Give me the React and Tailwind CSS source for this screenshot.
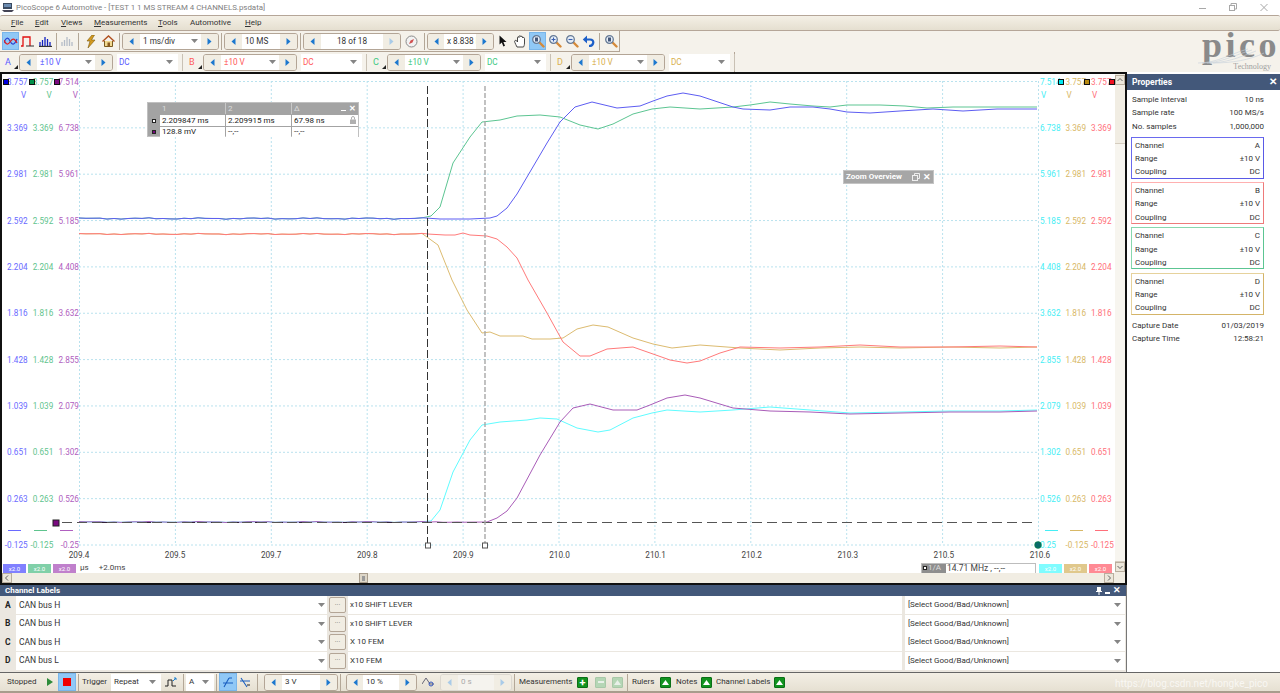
import React from "react";

const jitter = (base, from, to, a) => {
  const out = [];
  for (let x = from; x <= to; x += 7) {
    out.push([x, base + a * (Math.sin(x * 0.37) + Math.sin(x * 0.113 + 1)) * 0.5]);
  }
  return out;
};
const pts = (a) => a.map((p) => p.join(",")).join(" ");

const traces = [
  { c: "#5cc592", p: [...jitter(218.5, 79, 425, 0.7), [431, 216], [440, 207], [453, 163], [470, 137], [482, 122], [500, 120], [517, 116], [540, 115], [560, 117], [580, 125], [598, 129], [613, 124], [633, 114], [652, 109], [670, 107], [700, 109], [733, 107], [750, 105], [770, 102], [790, 104], [813, 106], [830, 107], [847, 105], [880, 105], [905, 106], [927, 108], [953, 107], [975, 107], [1000, 107], [1037, 107]] },
  { c: "#5d5df2", p: [...jitter(218.5, 79, 425, 0.8), [440, 219], [470, 219], [490, 218], [497, 216], [507, 208], [517, 194], [527, 177], [547, 143], [560, 122], [575, 107], [592, 102], [617, 108], [640, 106], [653, 101], [667, 96], [683, 93], [700, 96], [733, 107], [743, 109], [770, 110], [790, 107], [813, 107], [830, 109], [847, 112], [870, 113], [900, 111], [933, 109], [948, 110], [963, 111], [980, 110], [997, 109], [1037, 109]] },
  { c: "#dcbb70", p: [...jitter(234, 79, 428, 0.6), [438, 245], [452, 280], [467, 310], [482, 333], [490, 332], [500, 336], [523, 336], [532, 339], [550, 339], [563, 338], [577, 329], [593, 325], [608, 327], [633, 338], [653, 344], [672, 348], [700, 345], [740, 348], [780, 350], [820, 348], [860, 347], [900, 348], [950, 347], [1000, 348], [1037, 347]] },
  { c: "#ff7a7a", p: [...jitter(234, 79, 430, 0.7), [445, 235], [455, 235], [463, 233], [470, 235], [487, 236], [497, 239], [507, 247], [517, 258], [528, 280], [547, 313], [563, 342], [580, 356], [590, 356], [607, 349], [633, 347], [653, 354], [670, 360], [687, 363], [700, 361], [720, 353], [740, 347], [780, 348], [820, 347], [860, 345], [900, 347], [950, 347], [1000, 346], [1037, 347]] },
  { c: "#5ffcff", p: [...jitter(522, 79, 428, 0.4), [431, 521], [440, 510], [453, 472], [470, 440], [482, 425], [500, 422], [527, 420], [540, 418], [557, 419], [577, 428], [598, 432], [610, 430], [633, 418], [652, 413], [667, 410], [700, 412], [733, 410], [770, 407], [810, 410], [850, 413], [900, 412], [950, 411], [1000, 411], [1037, 410]] },
  { c: "#a95cb8", p: [...jitter(522, 79, 470, 0.5), [487, 522], [497, 518], [507, 511], [517, 498], [540, 455], [560, 422], [573, 408], [590, 404], [613, 410], [637, 410], [650, 405], [667, 398], [685, 395], [700, 398], [733, 408], [770, 411], [810, 412], [850, 414], [900, 413], [950, 412], [1000, 412], [1037, 411]] },
];

const Arrow = ({ dir = "l", dim }) => (
  <svg width="5" height="7" viewBox="0 0 5 7" className="flex-none">
    <path d={dir === "l" ? "M4.5 0 V7 L0.5 3.5 Z" : "M0.5 0 V7 L4.5 3.5 Z"} fill={dim ? "#a9cbe8" : "#1c78cf"} />
  </svg>
);
const Caret = () => (
  <svg width="7" height="4" viewBox="0 0 7 4" className="flex-none">
    <path d="M0 0 H7 L3.5 4 Z" fill="#858585" />
  </svg>
);
const Sep = () => <div className="w-px h-[17px] mx-[2px] flex-none bg-[#b3a797]" />;

const Stepper = ({ l = 17, t, r = 17, text, caret, center, color = "#333", dim, dimRight }) => (
  <div className={`flex flex-none h-[17px] border rounded-[3px] overflow-hidden ${dim ? "border-[#dcd8d0]" : "border-[#b3a596]"}`}>
    <div style={{ width: l }} className="flex items-center justify-center bg-[#f1ede3]"><Arrow dir="l" dim={dim} /></div>
    <div style={{ width: t, color }} className={`flex items-center overflow-hidden whitespace-nowrap ${center ? "justify-center" : "justify-between px-[3px]"} ${dim ? "bg-[#f5f3ee]" : "bg-white"}`}>
      <span>{text}</span>{caret && <Caret />}
    </div>
    <div style={{ width: r }} className="flex items-center justify-center bg-[#f1ede3]"><Arrow dir="r" dim={dim || dimRight} /></div>
  </div>
);

const Tool = ({ w = 17, active, children }) => (
  <div style={{ width: w }} className={`h-[18px] flex-none flex items-center justify-center ${active ? "bg-[#90c8f6] border border-[#7ab6ea]" : ""}`}>{children}</div>
);

const Mag = ({ inner }) => (
  <svg width="14" height="14" viewBox="0 0 14 14">
    <path d="M8 8 L12.5 12.5" stroke="#d58a3a" strokeWidth="2.4" strokeLinecap="round" />
    <circle cx="5.5" cy="5.5" r="3.8" fill="#e6eef8" stroke="#667a96" strokeWidth="1.3" />
    {inner === "+" && <path d="M3.5 5.5 H7.5 M5.5 3.5 V7.5" stroke="#3a5fb0" strokeWidth="1.1" />}
    {inner === "-" && <path d="M3.5 5.5 H7.5" stroke="#3a5fb0" strokeWidth="1.1" />}
    {inner === "o" && <rect x="4" y="3.5" width="3" height="4" fill="#44577a" />}
  </svg>
);

const ChannelGroup = ({ name, color }) => (
  <div className="flex items-center w-[184px] flex-none">
    <div className="w-[17px] h-[17px] relative flex-none">
      <span style={{ color }} className="absolute left-[3px] top-[2px] text-[9px]">{name}</span>
      <span className="absolute right-[1px] bottom-[2px] w-0 h-0 border-l-[4px] border-l-transparent border-b-[4px] border-b-[#222]" />
    </div>
    <Stepper text="±10 V" t={58} caret color={color} />
    <div style={{ color }} className="ml-[4px] w-[61px] h-[17px] bg-white flex items-center justify-between px-[2px] pr-[5px] flex-none">
      <span>DC</span><Caret />
    </div>
    <div className="ml-[4px] w-px h-[17px] bg-[#c9c1b4]" />
  </div>
);

const lb = ["3.369", "2.981", "2.592", "2.204", "1.816", "1.428", "1.039", "0.651", "0.263", "-0.125"];
const lp = ["6.738", "5.961", "5.185", "4.408", "3.632", "2.855", "2.079", "1.302", "0.526", "-0.25"];
const rc = lp.slice(0, 9).concat("0.25");

const Square = ({ color, className }) => (
  <span style={{ background: color }} className={`absolute top-[3px] w-[6px] h-[6px] border border-[#111] ${className}`} />
);

const AxisLeft = () => (
  <div className="w-[77px] flex-none flex flex-col pt-[1.5px] text-[8.2px]">
    <div className="h-[46.35px] flex-none">
      <div className="grid grid-cols-3 h-[12px] leading-[12px] text-right">
        <span className="relative text-[#6a6aff]">3.757<Square color="#0000e0" className="left-[1px]" /></span>
        <span className="relative text-[#5fc48e]">3.757<Square color="#00904a" className="left-[1px]" /></span>
        <span className="relative text-[#b060c0]">7.514<Square color="#7a0a80" className="left-[1px]" /></span>
      </div>
      <div className="grid grid-cols-3 h-[12px] mt-[1px] leading-[12px] text-right pr-[1px]">
        <span className="text-[#6a6aff] pr-[1px]">V</span>
        <span className="text-[#5fc48e] pr-[1px]">V</span>
        <span className="text-[#b060c0]">V</span>
      </div>
    </div>
    {lb.map((v, i) => (
      <div key={v} className="h-[46.35px] flex-none">
        <div className="grid grid-cols-3 h-[12px] leading-[12px] text-right">
          <span className="text-[#6a6aff]">{v}</span>
          <span className="text-[#5fc48e]">{v}</span>
          <span className="text-[#b060c0]">{lp[i]}</span>
        </div>
        {i === 8 && (
          <div className="grid grid-cols-[13px_13px_13px] mt-[25px] pl-[6px] gap-x-[13px]">
            <span className="h-px bg-[#6a6aff]" /><span className="h-px bg-[#5fc48e]" /><span className="h-px bg-[#b060c0]" />
          </div>
        )}
      </div>
    ))}
  </div>
);

const AxisRight = () => (
  <div className="w-[77px] flex-none flex flex-col pt-[1.5px] pl-[2px] text-[8.2px]">
    <div className="h-[46.35px] flex-none">
      <div className="grid grid-cols-[25.5px_25.5px_25px] h-[12px] leading-[12px]">
        <span className="relative text-[#45eef5]">7.514<Square color="#00e8f0" className="left-[18px]" /></span>
        <span className="relative text-[#d8b866]">3.757<Square color="#b88a10" className="left-[18px]" /></span>
        <span className="relative text-[#ff6f7a]">3.757<Square color="#f01020" className="left-[18px]" /></span>
      </div>
      <div className="grid grid-cols-[25.5px_25.5px_25px] h-[12px] mt-[1px] leading-[12px] pl-[1px]">
        <span className="text-[#45eef5]">V</span><span className="text-[#d8b866]">V</span><span className="text-[#ff6f7a]">V</span>
      </div>
    </div>
    {lb.map((v, i) => (
      <div key={v} className="h-[46.35px] flex-none">
        <div className="grid grid-cols-[25.5px_25.5px_25px] h-[12px] leading-[12px]">
          <span className="text-[#45eef5]">{rc[i]}</span>
          <span className="text-[#d8b866]">{v}</span>
          <span className="text-[#ff6f7a]">{v}</span>
        </div>
        {i === 8 && (
          <div className="grid grid-cols-[13px_13px_13px] mt-[25px] gap-x-[12px] pl-[5px]">
            <span className="h-px bg-[#45eef5]" /><span className="h-px bg-[#d8b866]" /><span className="h-px bg-[#ff6f7a]" />
          </div>
        )}
      </div>
    ))}
  </div>
);

const Plot = () => {
  const vx = Array.from({ length: 11 }, (_, i) => 79.5 + 95.9 * i);
  const hy = Array.from({ length: 11 }, (_, i) => 81.5 + 46.35 * i);
  return (
    <div className="relative w-[959px] h-[466px] mt-[6px] flex-none">
      <svg width="959" height="466" viewBox="79 80 959 466" className="overflow-visible block">
        {vx.map((x) => <line key={x} x1={x} x2={x} y1="81" y2="545" stroke="#b9e2ee" strokeDasharray="2 2" />)}
        {hy.map((y) => <line key={y} x1="79" x2="1038" y1={y} y2={y} stroke="#b9e2ee" strokeDasharray="2 2" />)}
        {traces.map((t, i) => <polyline key={i} points={pts(t.p)} fill="none" stroke={t.c} strokeWidth="1" />)}
        <line x1="79" x2="428" y1="522.5" y2="522.5" stroke="#33203a" strokeDasharray="6 16" />
        <line x1="62" x2="1037" y1="522.5" y2="522.5" stroke="#555" strokeDasharray="10 5" />
        <line x1="427.5" x2="427.5" y1="86" y2="543" stroke="#333" strokeDasharray="8 3" />
        <line x1="485" x2="485" y1="86" y2="543" stroke="#a8a8a8" strokeWidth="1.4" strokeDasharray="5 2" />
        <rect x="425.5" y="543" width="5" height="5" fill="#fff" stroke="#555" />
        <rect x="482.5" y="543" width="5" height="5" fill="#fff" stroke="#555" />
        <rect x="53" y="520" width="6" height="6" fill="#7a0a80" stroke="#222" />
        <circle cx="1038" cy="545" r="3.4" fill="#0a6a6a" stroke="#083" strokeWidth="0.5" />
      </svg>

      <div className="absolute left-[68px] top-[22px] w-[212px] h-[35px] bg-[#a3a3a3] border border-[#c0c0c0] flex flex-col text-[#222]">
        <div className="h-[11px] flex text-[#dcdcdc] leading-[11px] pl-[12px] flex-none">
          <span className="w-[66px] pl-[2px] border-r border-[#c8c8c8]">1</span>
          <span className="w-[66px] pl-[2px] border-r border-[#c8c8c8]">2</span>
          <span className="flex-1 pl-[2px] flex justify-between pr-[2px]">
            <span>Δ</span>
            <span className="flex items-center gap-[3px] text-white font-bold"><span className="w-[5px] h-px bg-white mt-[4px]" /><span>✕</span></span>
          </span>
        </div>
        <div className="flex h-[11px] leading-[11px] mt-px">
          <span className="w-[12px] flex items-center justify-center"><span className="w-[4px] h-[4px] bg-white border border-[#222]" /></span>
          <span className="w-[65px] bg-white pl-[2px] mr-px">2.209847 ms</span>
          <span className="w-[65px] bg-white pl-[2px] mr-px">2.209915 ms</span>
          <span className="flex-1 bg-white pl-[2px] flex justify-between pr-[2px]">67.98 ns
            <svg width="6" height="8" viewBox="0 0 6 8" className="mt-[1px]"><rect y="3.5" width="6" height="4.5" fill="#b0b0b0" /><path d="M1.5 3.5 V2 a1.5 1.5 0 0 1 3 0 V3.5" stroke="#b0b0b0" fill="none" /></svg>
          </span>
        </div>
        <div className="flex h-[10px] leading-[10px] mt-px">
          <span className="w-[12px] flex items-center justify-center"><span className="w-[4px] h-[4px] bg-[#7a0a80] border border-[#222]" /></span>
          <span className="w-[65px] bg-white pl-[2px] mr-px">128.8 mV</span>
          <span className="w-[65px] bg-white pl-[2px] mr-px">--,--</span>
          <span className="flex-1 bg-white pl-[2px]">--,--</span>
        </div>
      </div>

      <div className="absolute left-[764px] top-[90px] w-[91px] h-[14px] bg-[#a6a6a6] border border-[#c4c4c4] flex items-center justify-between px-[2px] text-white font-bold">
        <span>Zoom Overview</span>
        <span className="flex items-center gap-[3px]">
          <svg width="8" height="8" viewBox="0 0 8 8" fill="none" stroke="#eee"><rect x="0.5" y="2.5" width="5" height="5" /><path d="M2.5 2.5 V0.5 H7.5 V5.5 H5.5" /></svg>
          <span className="text-[9px] leading-none">✕</span>
        </span>
      </div>
    </div>
  );
};

const xl = ["209.4", "209.5", "209.7", "209.8", "209.9", "210.0", "210.1", "210.2", "210.3", "210.5", "210.6"];

const Chip = ({ c }) => (
  <div style={{ background: c }} className="w-[23px] h-[9px] flex-none text-white text-[6px] leading-[9px] text-center">x2.0</div>
);

const ScrollBtn = ({ children, className = "" }) => (
  <div className={`w-[10px] h-[10px] border border-[#b9ae9e] bg-[#ece7db] flex items-center justify-center flex-none ${className}`}>{children}</div>
);
const Chev = ({ d }) => (
  <svg width="6" height="6" viewBox="0 0 6 6" fill="none" stroke="#555" strokeWidth="0.9"><path d={d} /></svg>
);

const Scope = () => (
  <div className="h-[513px] flex-none border-2 border-[#111] flex flex-col bg-white">
    <div className="flex flex-1 min-h-0">
      <div className="w-[1113px] flex-none flex flex-col">
        <div className="flex h-[475px] flex-none"><AxisLeft /><Plot /><AxisRight /></div>
        <div className="h-[12px] flex-none flex justify-between pl-[77px] pr-[75px] text-[#444] leading-[12px] text-[8.2px]">
          {xl.map((x) => <span key={x} className="w-0 flex justify-center whitespace-nowrap">{x}</span>)}
        </div>
        <div className="h-[12px] flex-none flex items-center pl-[1px] gap-[2px] mt-[1px]">
          <Chip c="#8080ff" /><Chip c="#80d0a8" /><Chip c="#c080cc" />
          <span className="ml-[2px] text-[#444]">µs</span>
          <span className="ml-[8px] text-[#444]">+2.0ms</span>
          <div className="ml-auto w-[115px] h-[11px] border border-[#bdbdbd] flex items-center text-[#444] mr-[1px]">
            <span className="w-[24px] h-full bg-[#8e8e8e] text-[#ddd] flex items-center gap-[1px] pl-[1px]"><span className="w-[4px] h-[4px] bg-white border border-[#222]" />1/A</span>
            <span className="pl-[1px] whitespace-nowrap text-[8.5px]">14.71 MHz , --,--</span>
          </div>
          <Chip c="#80fcff" /><Chip c="#e0c88c" /><Chip c="#ff8a94" />
          <div className="w-[1px]" />
        </div>
      </div>
      <div className="flex-1 flex flex-col bg-[#f1ede3] items-start pt-[1px] pb-[1px]">
        <ScrollBtn><Chev d="M0.5 4 L3 1.5 L5.5 4" /></ScrollBtn>
        <div className="flex-1 w-full flex flex-col pt-[58px]"><div className="flex-1 border-y border-[#d5cdbf] bg-[#f7f5ef]" /></div>
        <ScrollBtn><Chev d="M0.5 2 L3 4.5 L5.5 2" /></ScrollBtn>
      </div>
    </div>
    <div className="h-[10px] flex-none flex items-center bg-[#f1ede3] pr-[11px]">
      <ScrollBtn><Chev d="M4 0.5 L1.5 3 L4 5.5" /></ScrollBtn>
      <div className="flex-1 pl-[347px]"><div className="w-[9px] h-[10px] border border-[#a89c8c] bg-[#ddd6c8] flex items-center justify-center"><span className="w-[3px] h-[5px] bg-[#9a9a9a]" /></div></div>
      <ScrollBtn><Chev d="M2 0.5 L4.5 3 L2 5.5" /></ScrollBtn>
    </div>
  </div>
);

const rows = [
  ["A", "CAN bus H", "x10 SHIFT LEVER"],
  ["B", "CAN bus H", "x10 SHIFT LEVER"],
  ["C", "CAN bus H", "X 10 FEM"],
  ["D", "CAN bus L", "X10 FEM"],
];

const ChannelLabels = () => (
  <div className="h-[87px] flex-none flex flex-col bg-[#ebe7e0] border-r border-[#777]">
    <div className="h-[11px] flex-none bg-[#43587a] text-white font-bold flex items-center justify-between px-[5px] leading-none">
      <span>Channel Labels</span>
      <span className="flex items-center gap-[3px] text-[9px]">
        <svg width="6" height="8" viewBox="0 0 6 8" fill="#fff"><path d="M1 0 H5 V4 H6 V5 H3.5 V8 H2.5 V5 H0 V4 H1 Z" /></svg>
        <span className="w-[5px] h-[2px] bg-white mt-[4px]" />
        <span>✕</span>
      </span>
    </div>
    <div className="flex-1 flex flex-col gap-[0.6px] pb-[1px]">
      {rows.map(([a, b, c]) => (
        <div key={a} className="h-[18px] flex items-stretch">
          <span className="w-[16px] flex-none font-bold text-[#222] flex items-center pl-[5px] text-[8.5px]">{a}</span>
          <div className="w-[311px] flex-none bg-white flex items-center justify-between pl-[3px] pr-[2px] text-[#333] text-[8.5px]"><span>{b}</span><Caret /></div>
          <div className="w-[17px] flex-none mx-[2px] h-[16px] self-center border border-[#b3a596] rounded-[2px] bg-[#f1ede3] text-[#777] flex items-center justify-center text-[7px] leading-none">···</div>
          <div className="w-[554px] flex-none bg-white flex items-center pl-[2px] text-[#333]">{c}</div>
          <div className="w-[220px] ml-[3px] flex-none bg-white flex items-center justify-between pl-[3px] pr-[4px] text-[#333]"><span>[Select Good/Bad/Unknown]</span><Caret /></div>
        </div>
      ))}
    </div>
  </div>
);

const PropRow = ({ a, b }) => (
  <div className="flex justify-between h-[13.3px] leading-[13.3px] text-[#333] whitespace-nowrap"><span>{a}</span><span>{b}</span></div>
);
const ChBox = ({ name, c1, c2 }) => (
  <div style={{ borderColor: c1, borderBottomColor: c2, borderRightColor: c2 }} className="w-[133px] h-[42px] border-[1.5px] px-[3px] pt-[1px]">
    <PropRow a="Channel" b={name} />
    <PropRow a="Range" b="±10 V" />
    <PropRow a="Coupling" b="DC" />
  </div>
);

const Properties = () => (
  <div className="w-[153px] flex-none flex flex-col bg-white">
    <div className="h-[16px] mt-[2px] flex-none bg-[#43587a] text-white font-bold flex items-center justify-between pl-[5px] pr-[3px] text-[8.5px]">
      <span>Properties</span><span className="text-[10px] leading-none">✕</span>
    </div>
    <div className="pl-[5px] pr-[16px] pt-[3px]">
      <PropRow a="Sample interval" b="10 ns" />
      <PropRow a="Sample rate" b="100 MS/s" />
      <PropRow a="No. samples" b="1,000,000" />
      <div className="flex flex-col gap-[3.3px] mt-[4px] -mr-[1px] -ml-[1px]">
        <ChBox name="A" c1="#6a6aee" c2="#5a5ae6" />
        <ChBox name="B" c1="#ffb0b0" c2="#ee7a7a" />
        <ChBox name="C" c1="#88d8ae" c2="#5cc592" />
        <ChBox name="D" c1="#e6d29c" c2="#d4b468" />
      </div>
      <div className="mt-[4px]">
        <PropRow a="Capture Date" b="01/03/2019" />
        <PropRow a="Capture Time" b="12:58:21" />
      </div>
    </div>
  </div>
);

const GreenBtn = ({ kind, dim }) => (
  <div className={`w-[11px] h-[11px] flex-none rounded-[1px] flex items-center justify-center ${dim ? "bg-[#b5d6b5] border border-[#a8c8a8]" : "bg-[#12931f] border border-[#0b6f17]"}`}>
    {kind === "+" && <span className="text-white text-[11px] font-bold leading-none">+</span>}
    {kind === "-" && <span className="w-[6px] h-[2px] bg-[#e8f0e8]" />}
    {kind === "^" && <svg width="7" height="5" viewBox="0 0 7 5"><path d="M0 5 L3.5 0 L7 5 Z" fill={dim ? "#e8f0e8" : "#fff"} /></svg>}
  </div>
);

const Select = ({ w, text }) => (
  <div style={{ width: w }} className="h-[17px] flex-none bg-white flex items-center justify-between px-[3px] pr-[5px] text-[#333]"><span>{text}</span><Caret /></div>
);

const Bottom = () => (
  <div className="h-[21px] flex-none border-t border-[#666] bg-gradient-to-b from-[#f3efe5] to-[#e6e0d2] border-b-2 border-b-[#a89c8c] flex items-center text-[#333] relative">
    <span className="w-[42px] pl-[7px] flex-none">Stopped</span>
    <div className="w-[16px] flex-none flex justify-center"><svg width="6" height="8" viewBox="0 0 6 8"><path d="M0 0 V8 L6 4 Z" fill="#2e8b3a" /></svg></div>
    <Tool w={18} active><span className="w-[8px] h-[8px] bg-[#f00000]" /></Tool>
    <Sep />
    <span className="w-[30px] flex-none pl-[1px]">Trigger</span>
    <Select w={50} text="Repeat" />
    <Tool w={20}>
      <svg width="12" height="11" viewBox="0 0 12 11" fill="none"><path d="M0 9 H3 V3 H7 V9 H11" stroke="#222" /><path d="M8 4 L11 1 M9 1 H11 V3" stroke="#1a7fd0" /></svg>
    </Tool>
    <Sep />
    <Select w={28} text="A" />
    <Sep />
    <Tool w={18} active>
      <svg width="11" height="11" viewBox="0 0 11 11" fill="none"><path d="M1 10 L6 1 M0 6 H10 M6 1 L9 1" stroke="#1a5fc0" strokeWidth="1.1" /></svg>
    </Tool>
    <Tool w={16}>
      <svg width="11" height="11" viewBox="0 0 11 11" fill="none"><path d="M1 1 L7 10 M0 4 H10" stroke="#1a5fc0" strokeWidth="1.1" /><path d="M7 8 L10 8" stroke="#222" /></svg>
    </Tool>
    <div className="w-[2px]" /><Sep />
    <div className="w-[4px]" />
    <Stepper text="3 V" t={38} />
    <Sep />
    <div className="w-[3px]" />
    <Stepper text="10 %" t={36} l={16} />
    <Tool w={23}>
      <svg width="13" height="12" viewBox="0 0 13 12" fill="none"><path d="M0 8 L4 2 L8 8 L12 8" stroke="#667" /><circle cx="9" cy="8" r="2" stroke="#35b" /></svg>
    </Tool>
    <Stepper text="0 s" t={36} dim color="#aaa" />
    <Sep />
    <span className="pl-[2px] w-[60px] flex-none">Measurements</span>
    <GreenBtn kind="+" />
    <div className="w-[7px]" />
    <GreenBtn kind="-" dim />
    <div className="w-[6px]" />
    <GreenBtn kind="^" dim />
    <div className="w-[2px]" /><Sep />
    <span className="pl-[2px] w-[30px] flex-none">Rulers</span>
    <GreenBtn kind="^" />
    <span className="pl-[5px] w-[30px] flex-none">Notes</span>
    <GreenBtn kind="^" />
    <span className="pl-[4px] w-[62px] flex-none">Channel Labels</span>
    <GreenBtn kind="^" />
    <span className="absolute left-[1115px] top-[3px] text-[10px] text-white/70 whitespace-nowrap">https://blog.csdn.net/hongke_pico</span>
  </div>
);

export default function App() {
  return (
    <div className="w-[1280px] h-[693px] overflow-hidden flex flex-col bg-white text-[8px] font-['Roboto',Arial,sans-serif]">
      {/* title */}
      <div className="h-[15px] flex-none flex items-center bg-white">
        <svg width="12" height="11" viewBox="0 0 12 11" className="ml-[2px]"><rect x="1" y="1" width="9" height="6" fill="#3a4a60" /><rect x="2" y="2" width="7" height="3" fill="#6b8bb0" /><path d="M0 8 H12 L10 10 H2 Z" fill="#445" /></svg>
        <span className="ml-[2px] text-[7.9px] text-[#808080] whitespace-nowrap">PicoScope 6 Automotive - [TEST 1 1 MS STREAM 4 CHANNELS.psdata]</span>
        <div className="ml-auto flex items-center">
          <svg width="30" height="10" viewBox="0 0 30 10" fill="none" stroke="#a8a8a8"><path d="M0 5.5 H7" /></svg>
          <svg width="31" height="10" viewBox="0 0 31 10" fill="none" stroke="#a8a8a8"><rect x="0.5" y="2.5" width="5" height="5" /><path d="M2 2.5 V0.5 H7.5 V6 H5.5" /></svg>
          <svg width="20" height="10" viewBox="0 0 20 10" fill="none" stroke="#a8a8a8"><path d="M0.5 1 L7.5 8 M7.5 1 L0.5 8" /></svg>
        </div>
      </div>
      {/* menu */}
      <div className="h-[16px] flex-none border-y border-[#b5a698] bg-gradient-to-b from-[#f4f0e6] to-[#e5dfd0] flex items-center text-[#333] text-[8px] rounded-[2px]">
        <span className="pl-[11px] w-[35px]"><u>F</u>ile</span>
        <span className="w-[26px]"><u>E</u>dit</span>
        <span className="w-[33px]"><u>V</u>iews</span>
        <span className="w-[64px]"><u>M</u>easurements</span>
        <span className="w-[32px]"><u>T</u>ools</span>
        <span className="w-[55px]">Automotive</span>
        <span><u>H</u>elp</span>
      </div>
      {/* toolbars */}
      <div className="h-[41px] flex-none bg-[#f5f2eb] flex relative">
        <div className="flex flex-col">
          <div className="h-[21px] w-[620px] border-r border-b border-[#b3a596] flex items-center pl-[2px] text-[#333] text-[8.2px]">
            <Tool active>
              <svg width="14" height="11" viewBox="0 0 14 11" fill="none"><path d="M0 7 C2 1 4 1 6 5 S10 10 13 3" stroke="#2a3fd0" strokeWidth="1.2" /><path d="M0 4 C2 9 4 9 6 6 S10 1 13 7" stroke="#e02020" strokeWidth="1.2" /></svg>
            </Tool>
            <Tool>
              <svg width="13" height="11" viewBox="0 0 13 11" fill="none"><path d="M0 10 H2 V1 H9 V10" stroke="#e01010" strokeWidth="1.3" /><path d="M5 10 H13" stroke="#333" /></svg>
            </Tool>
            <Tool w={18}>
              <svg width="13" height="11" viewBox="0 0 13 11" stroke="#1020c0" strokeWidth="1.3"><path d="M1 10 V6 M3.5 10 V4 M6 10 V1 M8.5 10 V3 M11 10 V6" /><path d="M0 10.5 H13" stroke="#333" /></svg>
            </Tool>
            <Sep />
            <Tool>
              <svg width="13" height="11" viewBox="0 0 13 11" stroke="#b4bcc8" strokeWidth="1.3"><path d="M1 10 V6 M3.5 10 V4 M6 10 V1 M8.5 10 V3 M11 10 V6" /></svg>
            </Tool>
            <Sep />
            <Tool w={18}>
              <svg width="11" height="13" viewBox="0 0 11 13"><path d="M7 0 L2 6 H5 L3 13 L10 5 H6.5 L9.5 0 Z" fill="#d49a20" stroke="#7a5a10" strokeWidth="0.6" /></svg>
            </Tool>
            <Tool w={18}>
              <svg width="13" height="12" viewBox="0 0 13 12"><path d="M2.5 6 V11.5 H10.5 V6" fill="#f0d890" stroke="#7a5a20" /><path d="M0.5 6.5 L6.5 1 L12.5 6.5" fill="none" stroke="#b05020" strokeWidth="1.4" /><rect x="5.5" y="7.5" width="2.5" height="4" fill="#8a5a20" /></svg>
            </Tool>
            <Sep />
            <div className="w-[1px]" />
            <Stepper text="1 ms/div" t={61} caret />
            <div className="w-[3px]" /><Sep /><div className="w-px h-[17px] bg-[#b3a597]" /><div className="w-[2px]" />
            <Stepper text="10 MS" t={38} />
            <Sep /><div className="w-[1px]" />
            <Stepper text="18 of 18" t={62} center dimRight />
            <Tool w={21}>
              <svg width="13" height="13" viewBox="0 0 13 13" fill="none"><circle cx="6.5" cy="6.5" r="5.5" fill="#f2f2f2" stroke="#8a8a8a" /><path d="M9 4 L5.5 5.5 L4 9 L7.5 7.5 Z" fill="#d05050" /></svg>
            </Tool>
            <Sep /><div className="w-[1px]" />
            <Stepper text="x 8.838 k" t={32} l={16} />
            <Tool w={18}>
              <svg width="8" height="12" viewBox="0 0 8 12"><path d="M0.5 0.5 V9.5 L2.8 7.5 L4.4 11.5 L6 10.8 L4.4 7 H7.5 Z" fill="#111" /></svg>
            </Tool>
            <Tool>
              <svg width="13" height="13" viewBox="0 0 13 13" fill="#fff" stroke="#333" strokeWidth="0.9"><path d="M3 12 C1 8 0 6 1 5.5 S3 6 3.5 7 V2.5 C3.5 1.5 5 1.5 5 2.5 V1.5 C5 .5 6.8 .5 6.8 1.5 V2 C7 1 8.5 1 8.5 2.2 V3 C8.8 2.2 10.5 2.2 10.5 3.5 V8 C10.5 10 10 11 9.5 12 Z" /></svg>
            </Tool>
            <Tool active><Mag inner="o" /></Tool>
            <Tool><Mag inner="+" /></Tool>
            <Tool><Mag inner="-" /></Tool>
            <Tool>
              <svg width="13" height="12" viewBox="0 0 13 12" fill="none"><path d="M3.5 4.5 H8 C13 4.5 12 11 7 11" stroke="#1d5fc8" strokeWidth="2.2" /><path d="M5 0.5 L0.8 4.5 L5 8.5 Z" fill="#1d5fc8" /></svg>
            </Tool>
            <Sep />
            <Tool w={18}><Mag inner="o" /></Tool>
          </div>
          <div className="h-[20px] w-[735px] border-r border-[#b3a596] flex items-center pl-[2px] text-[8.2px]">
            <ChannelGroup name="A" color="#5a5aff" />
            <ChannelGroup name="B" color="#ff5a5a" />
            <ChannelGroup name="C" color="#40c880" />
            <ChannelGroup name="D" color="#d8b050" />
          </div>
        </div>
        <div className="ml-auto w-[84px] flex flex-col items-end relative font-['Liberation_Serif',serif] text-[#8a8a8a]">
          <span className="text-[36px] leading-[29px] tracking-[3.5px] font-bold">pico</span>
          <svg width="76" height="16" viewBox="0 0 76 16" fill="none" stroke="#c6d0da" strokeWidth="0.6" className="absolute left-[2px] top-[17px]">
            <path d="M0 15 C20 15 34 5 50 1 M4 15 C24 15 36 7 54 2 M9 15 C28 15 40 10 58 3 M15 15 C34 15 52 12 66 5" />
          </svg>
          <span className="text-[8px] leading-[8px] pr-[9px] text-[#a0a0a0] mt-[3px]">Technology</span>
        </div>
      </div>
      {/* main */}
      <div className="h-[600px] flex-none flex">
        <div className="w-[1127px] flex-none flex flex-col">
          <Scope />
          <ChannelLabels />
        </div>
        <Properties />
      </div>
      <Bottom />
    </div>
  );
}
